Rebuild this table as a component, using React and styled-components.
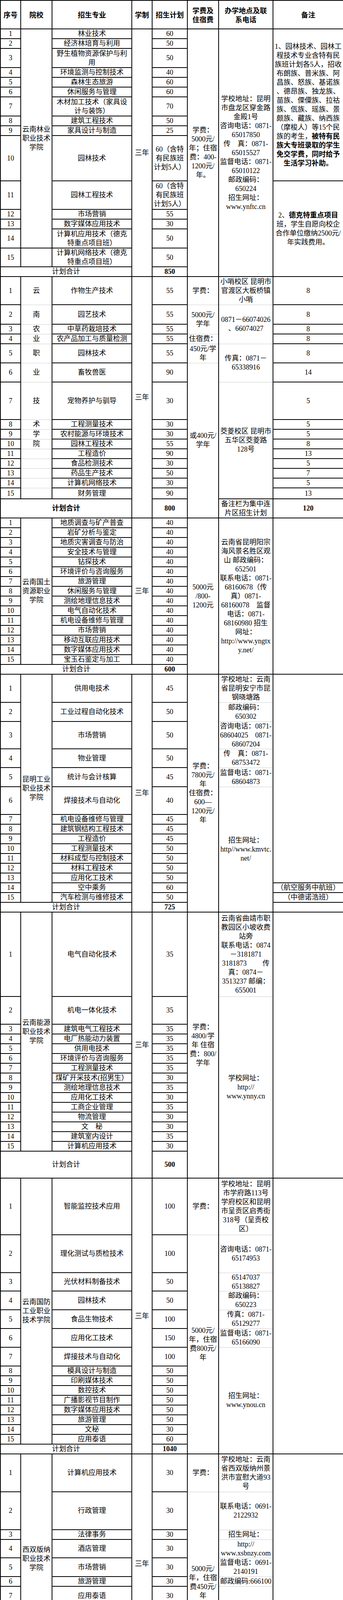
import React from "react";
import styled, { createGlobalStyle } from "styled-components";

const GlobalStyle = createGlobalStyle`
  html, body {
    margin: 0;
    padding: 0;
    background: #ffffff;
  }
  body {
    font-family: "Liberation Serif", "Noto Sans CJK SC", serif;
    color: #000000;
  }
`;

const Sheet = styled.table`
  width: 877px;
  table-layout: fixed;
  border-collapse: collapse;
  font-size: 18px;
  line-height: 23px;
`;

const Col = styled.col`
  width: ${(p) => p.$w}px;
`;

const Row = styled.tr`
  height: ${(p) => p.$h}px;
`;

const HeadCell = styled.th`
  border: 2px solid #000000;
  padding: 0 1px;
  font-family: "Noto Sans CJK SC", sans-serif;
  font-weight: 700;
  text-align: center;
  vertical-align: middle;
  white-space: nowrap;
`;

const Cell = styled.td`
  border: 2px solid #000000;
  border-top: ${(p) => (p.$softTop ? "1px solid #cfcfcf" : "2px solid #000000")};
  border-bottom: ${(p) => (p.$softBottom ? "1px solid #cfcfcf" : "2px solid #000000")};
  padding: 0 1px;
  text-align: center;
  vertical-align: middle;
  white-space: nowrap;
  font-weight: ${(p) => (p.$bold ? 700 : 400)};
`;

// one text line of a cell, fixed height so mixed fonts don't stretch rows
const Line = styled.div`
  height: 23px;
  line-height: 23px;
  white-space: nowrap;
`;

const Strong = styled.b`
  font-weight: 700;
`;

const COLS = [52, 80, 204, 52, 90, 80, 139, 180];

const HEAD = [
  ["序号"],
  ["院校"],
  ["招生专业"],
  ["学制"],
  ["招生计划"],
  ["学费及", "住宿费"],
  ["办学地点及联", "系电话"],
  ["备注"],
];

const Lines = ({ lines }) => {
  const list = Array.isArray(lines) ? lines : [lines];
  return list.map((l, i) => <Line key={i}>{l}</Line>);
};

const empty = (span) => ({ span, lines: [] });
const soft = (span, lines) => ({ span, lines, soft: true });

// rows: [专业, 计划, 行高, 备注?]
const SECTIONS = [
  {
    rows: [
      ["林业技术", "60", 25],
      ["经济林培育与利用", "50", 25],
      [["野生植物资源保护与利", "用"], "50", 49],
      ["环境监测与控制技术", "40", 25],
      ["森林生态旅游", "60", 25],
      ["休闲服务与管理", "60", 25],
      [["木材加工技术（家具设", "计与装饰）"], "70", 49],
      ["建筑工程技术", "50", 25],
      ["家具设计与制造", "25", 25],
      ["园林技术", ["60（含特", "有民族班", "计划5人）"], 116],
      ["园林工程技术", ["60（含特", "有民族班", "计划5人）"], 73],
      ["市场营销", "55", 25],
      ["数字媒体应用技术", "30", 25],
      [["计算机应用技术（德克", "特重点项目班）"], "50", 49],
      [["计算机网络技术（德克", "特重点项目班）"], "50", 48],
    ],
    totalH: 25,
    total: "850",
    school: [{ span: 14, lines: ["云南林业", "职业技术", "学院"] }, empty(1)],
    fee: [{ span: 16, lines: ["学费：", "5000元/", "年；住宿", "费：400-", "1200元/", "年。"] }],
    addr: [
      {
        span: 16,
        lines: [
          "学校地址：昆明",
          "市盘龙区穿金路",
          "金殿1号",
          "咨询电话：0871-",
          "65017850",
          "传　真：0871-",
          "65015527",
          "监督电话：0871-",
          "65010122",
          "邮政编码：",
          "650224",
          "招生网址：",
          "www.ynftc.cn",
        ],
      },
    ],
    note: [
      {
        span: 10,
        lines: [
          "1、园林技术、园林工",
          "程技术专业含特有民",
          "族班计划各5人，招收",
          "布朗族、普米族、阿",
          "昌族、怒族、基诺族",
          "、德昂族、独龙族、",
          "苗族、傈僳族、拉祜",
          "族、佤族、瑶族、景",
          "颇族、藏族、纳西族",
          "（摩梭人）等15个民",
          <>
            族的考生，<Strong>被特有民</Strong>
          </>,
          <Strong>族大专班录取的学生</Strong>,
          <Strong>免交学费，同时给予</Strong>,
          <Strong>生活学习补助。</Strong>,
        ],
      },
      {
        span: 6,
        lines: [
          <>
            2、<Strong>德克特重点项目</Strong>
          </>,
          "班，学生自愿向校企",
          "合作单位缴纳2500元/",
          "年实践费用。",
        ],
      },
    ],
  },
  {
    rows: [
      ["作物生产技术", "55", 72, "8"],
      ["园艺技术", "55", 50, "8"],
      ["中草药栽培技术", "55", 25, "8"],
      ["农产品加工与质量检测", "55", 25, "8"],
      ["园林技术", "55", 49, "8"],
      ["畜牧兽医", "90", 49, "14"],
      ["宠物养护与驯导", "30", 96, "5"],
      ["工程测量技术", "30", 25, "5"],
      ["农村能源与环境技术", "30", 25, "5"],
      ["园林工程技术", "55", 25, "8"],
      ["工程造价", "90", 25, "13"],
      ["食品检测技术", "30", 25, "5"],
      ["药品生产技术", "50", 25, "7"],
      ["计算机网络技术", "30", 25, "5"],
      ["财务管理", "90", 28, "13"],
    ],
    totalH: 49,
    total: "800",
    totalBold: true,
    school: ["云", "南", "农", "业", "职", "业", "技", "术", "学", "院", "", "", "", "", ""].map(
      (t, i) => ({ span: 1, lines: t ? [t] : [], soft: i > 0 })
    ),
    fee: [
      { span: 1, lines: ["学费："] },
      soft(2, ["5000元/", "学年"]),
      soft(1, ["住宿费："]),
      soft(1, ["450元/学", "年"]),
      soft(11, ["或400元/", "学年"]),
    ],
    addr: [
      { span: 1, lines: ["小哨校区 昆明市", "官渡区大板桥镇", "小哨"] },
      soft(3, ["0871－66074026", "、66074027"]),
      soft(2, ["传真：0871－", "65338916"]),
      soft(9, ["茭菱校区 昆明市", "五华区茭菱路", "128号"]),
      { span: 1, lines: ["备注栏为集中连", "片区招生计划"] },
    ],
    noteFromRows: true,
    noteTotal: { span: 1, lines: ["120"], bold: true },
  },
  {
    rows: [
      "地质调查与矿产普查",
      "岩矿分析与鉴定",
      "地质灾害调查与防治",
      "安全技术与管理",
      "钻探技术",
      "环境评价与咨询服务",
      "旅游管理",
      "休闲服务与管理",
      "测绘地理信息技术",
      "电气自动化技术",
      "机电设备维修与管理",
      "市场营销",
      "移动互联应用技术",
      "数字媒体应用技术",
      "宝玉石鉴定与加工",
    ].map((m) => [m, "40", 25]),
    totalH: 25,
    total: "600",
    wide: true,
    school: [{ span: 15, lines: ["云南国土", "资源职业", "学院"] }],
    fee: [{ span: 16, lines: ["5000元", "/800-", "1200元"] }],
    addr: [
      {
        span: 16,
        lines: [
          "云南省昆明阳宗",
          "海风景名胜区观",
          "山 邮政编码：",
          "652501",
          "联系电话：0871-",
          "68160678（传",
          "真）0871-",
          "68160078　监督",
          "电话：0871-",
          "68160980 招生",
          "网址：",
          "http://www.yngtx",
          "y.net/",
        ],
      },
    ],
    note: [empty(16)],
  },
  {
    rows: [
      ["供用电技术", "45", 72],
      ["工业过程自动化技术", "50", 49],
      ["市场营销", "50", 69],
      ["物业管理", "50", 48],
      ["统计与会计核算", "45", 49],
      ["焊接技术与自动化", "40", 71],
      ["机电设备维修与管理", "45", 25],
      ["建筑钢结构工程技术", "45", 25],
      ["工程造价", "45", 25],
      ["工程测量技术", "50", 25],
      ["材料成型与控制技术", "50", 25],
      ["材料工程技术", "50", 25],
      ["应用化工技术", "50", 25],
      ["空中乘务", "60", 25],
      ["汽车检测与维修技术", "50", 25],
    ],
    totalH: 25,
    total: "725",
    school: [{ span: 15, lines: ["昆明工业", "职业技术", "学院"] }],
    fee: [{ span: 16, lines: ["学费：", "7800元/", "年", "住宿费：", "600—", "1200元/", "年"] }],
    addr: [
      { span: 1, lines: ["学校地址：云南", "省昆明安宁市昆", "钢晓塘路"] },
      soft(1, ["邮政编码：", "650302"]),
      soft(1, ["咨询电话：0871-", "68604025　0871-", "68607204"]),
      soft(1, ["传　真：0871-", "68753472"]),
      soft(1, ["监督电话：0871-", "68604873"]),
      soft(11, ["招生网址：", "http//www.kmvtc.", "net/"]),
    ],
    note: [empty(13), { span: 1, lines: ["（航空服务中航班）"] }, { span: 1, lines: ["（中德诺浩班）"] }, empty(1)],
  },
  {
    rows: [
      ["电气自动化技术", "35", 216],
      ["机电一体化技术", "35", 71],
      ["建筑电气工程技术", "35", 25],
      ["电厂热能动力装置", "35", 25],
      ["供用电技术", "35", 25],
      ["环境评价与咨询服务", "35", 25],
      ["工程测量技术", "35", 25],
      ["煤矿开采技术(招男生）", "30", 25],
      ["测绘地理信息技术", "35", 25],
      ["应用化工技术", "30", 25],
      ["工商企业管理", "35", 25],
      ["物流管理", "30", 25],
      ["文　秘", "30", 25],
      ["建筑室内设计", "35", 25],
      ["计算机应用技术", "30", 25],
    ],
    totalH: 69,
    total: "500",
    school: [{ span: 15, lines: ["云南能源", "职业技术", "学院"] }],
    fee: [{ span: 16, lines: ["学费：", "4800/学", "年  住宿", "费：800/", "学年"] }],
    addr: [
      {
        span: 1,
        lines: [
          "云南省曲靖市职",
          "教园区小坡收费",
          "站旁",
          "联系电话：0874",
          "－3181871",
          "3181873　　 传",
          "真：0874－",
          "3513237  邮编：",
          "655001",
        ],
      },
      soft(15, ["学校网址：", "http://", "www.ynny.cn"]),
    ],
    note: [empty(16)],
  },
  {
    rows: [
      ["智能监控技术应用", "100", 145],
      ["理化测试与质检技术", "100", 97],
      ["光伏材料制备技术", "50", 47],
      ["园林技术", "50", 48],
      ["食品生物技术", "100", 48],
      ["应用化工技术", "150", 48],
      ["焊接技术与自动化", "100", 48],
      ["模具设计与制造", "50", 25],
      ["印刷媒体技术", "50", 25],
      ["数控技术", "50", 25],
      ["广播影视节目制作", "50", 25],
      ["数字媒体应用技术", "50", 25],
      ["旅游管理", "50", 25],
      ["文秘", "30", 25],
      ["应用泰语", "60", 25],
    ],
    totalH: 25,
    total: "1040",
    school: [{ span: 15, lines: ["云南国防", "工业职业", "技术学院"] }],
    fee: [{ span: 1, lines: ["学费："] }, soft(15, ["5000元/", "年，住宿", "费800元/", "年"])],
    addr: [
      {
        span: 1,
        lines: ["学校地址：昆明", "市学府路113号", "学府校区和昆明", "市呈贡区启秀街", "318号（呈贡校", "区）"],
      },
      soft(1, ["咨询电话：0871-", "65174953"]),
      soft(1, ["65147037", "65138827"]),
      soft(1, ["邮政编码：", "650223"]),
      soft(1, ["传真：0871-", "65129277"]),
      soft(1, ["监督电话：0871-", "65166090"]),
      soft(10, ["招生网址：", "www.ynou.cn"]),
    ],
    note: [empty(16)],
  },
  {
    rows: [
      ["计算机应用技术", "30", 97],
      ["行政管理", "30", 97],
      ["法律事务", "30", 25],
      ["酒店管理", "30", 47],
      ["市场营销", "30", 48],
      ["旅游管理", "30", 25],
      ["应用泰语", "30", 48],
      ["应用外语（老挝语）", "30", 25],
      ["食品质量与安全", "40", 25],
      ["林业技术", "30", 25],
      ["园艺技术", "30", 25],
      ["园林技术", "30", 25],
      ["应用外语（缅甸语）", "30", 25],
    ],
    totalH: 25,
    total: "400",
    school: [{ span: 13, lines: ["西双版纳", "职业技术", "学院"] }],
    fee: [{ span: 1, lines: ["学费："] }, soft(13, ["5000元/", "年，住宿", "费450元/", "年"])],
    addr: [
      { span: 1, lines: ["学校地址：云南", "省西双版纳州景", "洪市宣慰大道93", "号"] },
      soft(1, ["联系电话：0691-", "2122932"]),
      soft(1, ["招生网址："]),
      soft(1, ["http://", "www.xsbnzy.com"]),
      soft(1, ["监督电话：0691-", "2140191"]),
      soft(1, ["邮政编码:666100"]),
      soft(8, ["传　真：0691-", "2141371"]),
    ],
    note: [empty(14)],
  },
  {
    rows: [
      ["会计", "650", 73],
      ["经济信息管理", "220", 73],
      ["空中乘务", "60", 97],
      ["物流管理", "50", 25],
      ["电子商务", "60", 25],
      ["电力系统自动化技术", "60", 73],
      ["工程造价", "240", 25],
      ["建设工程管理", "120", 97],
      ["汽车营销与服务", "60", 48],
      ["水利水电建筑工程", "60", 25],
      ["首饰设计与工艺", "50", 70],
      ["广告设计与制作", "170", 25],
    ],
    totalH: 25,
    total: "1800",
    school: [{ span: 12, lines: ["云南经济", "管理学院"] }],
    fee: [
      { span: 2, lines: ["学费：", "9500元/", "生•年"] },
      soft(3, ["住宿费：", "600—", "1400元/", "生•年"]),
      { span: 2, lines: ["学费：", "10500元/", "生•年"] },
      soft(5, ["住宿费：", "600—", "1400元/", "生•年"]),
      { span: 1, lines: ["——"] },
    ],
    addr: [
      { span: 1, lines: ["学校地址："] },
      soft(1, ["海源校区（昆明", "市五华区海屯路", "296号）"]),
      soft(2, ["安宁校区（安宁", "市职教基地麒麟", "路17号）"]),
      soft(2, ["咨询电话: 0871-", "68314770"]),
      soft(2, ["传真: 0871-", "66217745"]),
      soft(1, ["QQ：4000-320-", "777"]),
      soft(1, ["邮编：650106"]),
      soft(3, ["网址：", "http://www.ynjgy.", "com"]),
    ],
    note: [empty(13)],
  },
];

// turn a column's list of cells into a map: first row index -> cell
const byStart = (list) => {
  const map = {};
  let at = 0;
  list.forEach((c, k) => {
    map[at] = { ...c, softBottom: !!(list[k + 1] && list[k + 1].soft) };
    at += c.span;
  });
  return map;
};

const SpanCell = ({ c }) => (
  <Cell rowSpan={c.span} $softTop={c.soft} $softBottom={c.softBottom} $bold={c.bold}>
    <Lines lines={c.lines} />
  </Cell>
);

function sectionRows(s, si) {
  const n = s.rows.length;
  const notes = s.noteFromRows
    ? [...s.rows.map((r) => ({ span: 1, lines: [r[3]] })), s.noteTotal]
    : s.note;
  const school = byStart(s.school);
  const fee = byStart(s.fee);
  const addr = byStart(s.addr);
  const note = byStart(notes);

  const out = [];
  for (let i = 0; i <= n; i++) {
    const isTotal = i === n;
    const r = s.rows[i];
    const cells = [];
    if (isTotal) {
      cells.push(
        <Cell key="label" colSpan={s.wide ? 4 : 3} $bold={s.totalBold}>
          <Line>计划合计</Line>
        </Cell>
      );
    } else {
      cells.push(
        <Cell key="no">
          <Line>{i + 1}</Line>
        </Cell>
      );
      if (school[i]) cells.push(<SpanCell key="school" c={school[i]} />);
      cells.push(
        <Cell key="major">
          <Lines lines={r[0]} />
        </Cell>
      );
    }
    if (i === 0) {
      cells.push(
        <Cell key="len" rowSpan={s.wide ? n : n + 1}>
          <Line>三年</Line>
        </Cell>
      );
    }
    cells.push(
      <Cell key="plan" $bold={isTotal}>
        <Lines lines={isTotal ? s.total : r[1]} />
      </Cell>
    );
    if (fee[i]) cells.push(<SpanCell key="fee" c={fee[i]} />);
    if (addr[i]) cells.push(<SpanCell key="addr" c={addr[i]} />);
    if (note[i]) cells.push(<SpanCell key="note" c={note[i]} />);
    out.push(
      <Row key={`${si}-${i}`} $h={isTotal ? s.totalH : r[2]}>
        {cells}
      </Row>
    );
  }
  return out;
}

export default function App() {
  return (
    <>
      <GlobalStyle />
      <Sheet>
        <colgroup>
          {COLS.map((w, i) => (
            <Col key={i} $w={w} />
          ))}
        </colgroup>
        <thead>
          <Row $h={73}>
            {HEAD.map((h, i) => (
              <HeadCell key={i}>
                <Lines lines={h} />
              </HeadCell>
            ))}
          </Row>
        </thead>
        <tbody>{SECTIONS.map((s, si) => sectionRows(s, si))}</tbody>
      </Sheet>
    </>
  );
}
